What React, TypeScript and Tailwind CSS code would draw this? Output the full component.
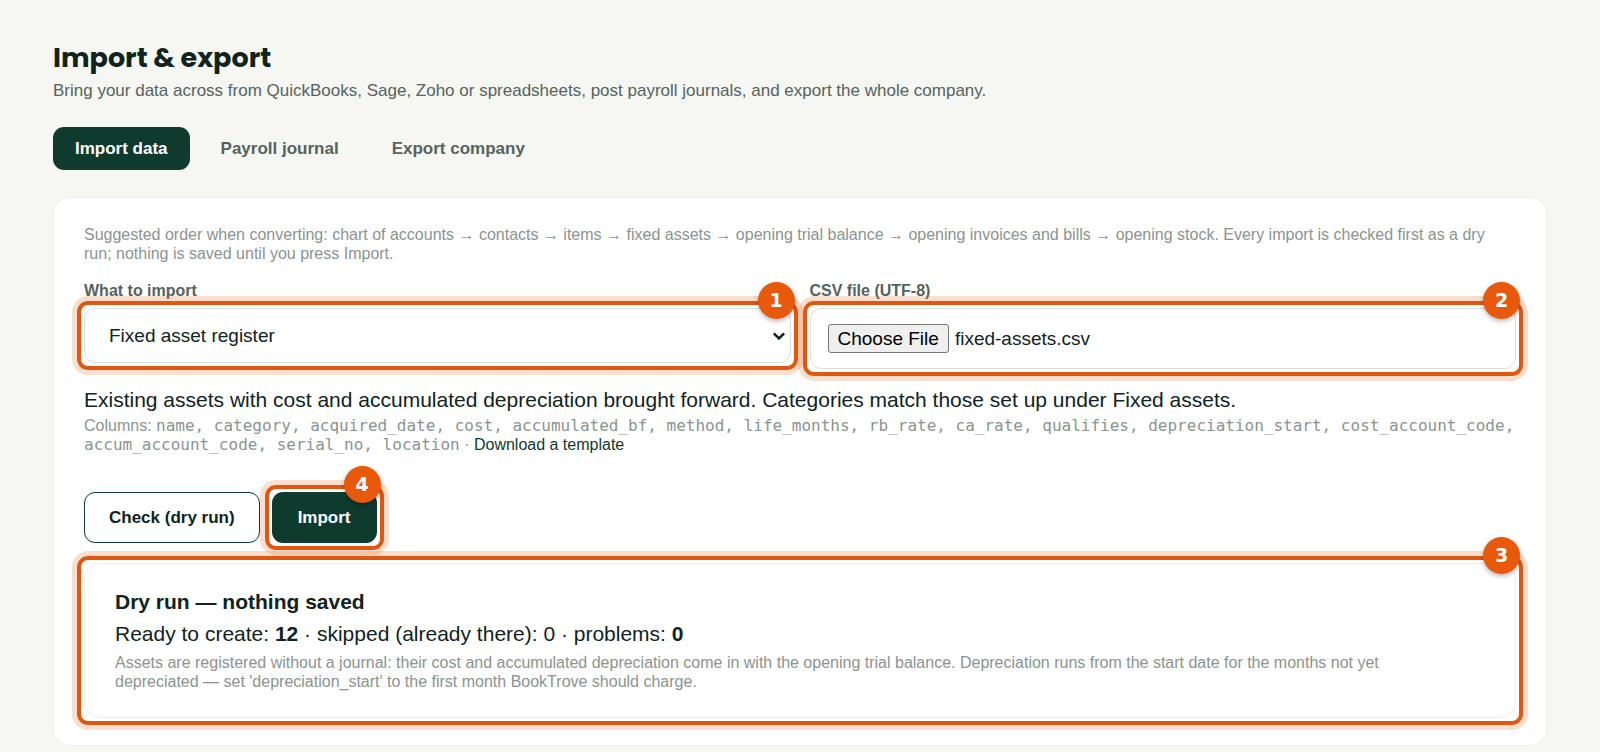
import { useEffect, useRef, useState } from 'react'

const tabs = ['Import data', 'Payroll journal', 'Export company']

const importTypes = [
  'Chart of accounts',
  'Contacts',
  'Items',
  'Fixed asset register',
  'Opening trial balance',
  'Opening invoices and bills',
  'Opening stock',
]

const columns = [
  'name',
  'category',
  'acquired_date',
  'cost',
  'accumulated_bf',
  'method',
  'life_months',
  'rb_rate',
  'ca_rate',
  'qualifies',
  'depreciation_start',
  'cost_account_code',
  'accum_account_code',
  'serial_no',
  'location',
]

// Orange ring with a numbered badge, drawn over the element it points at
function Callout({ step, children }: { step: number; children: React.ReactNode }) {
  return (
    <div className="relative">
      {children}
      <div className="pointer-events-none absolute -inset-[7px] z-10 rounded-[11px] border-4 border-[#e0580f] shadow-[0_0_0_5px_rgba(232,89,12,0.2)]">
        <span className="absolute -top-[23px] -right-px flex h-[37px] w-[37px] items-center justify-center rounded-full bg-[#e8590c] font-['DejaVu_Sans',sans-serif] text-[19px] font-bold text-white shadow-[0_2px_5px_rgba(0,0,0,0.3)]">
          {step}
        </span>
      </div>
    </div>
  )
}

export default function App() {
  const [tab, setTab] = useState('Import data')
  const [kind, setKind] = useState('Fixed asset register')
  const fileRef = useRef<HTMLInputElement>(null)

  useEffect(() => {
    if (!fileRef.current) return
    const transfer = new DataTransfer()
    transfer.items.add(new File([columns.join(',')], 'fixed-assets.csv', { type: 'text/csv' }))
    fileRef.current.files = transfer.files
  }, [])

  return (
    <div className="min-h-screen bg-[#f6f7f3] font-['Liberation_Sans',Arial,sans-serif] text-[21px] leading-[25px] text-[#10231d]">
      <main className="px-[53px] pt-[39px] pb-[5px]">
        <h1 className="font-['Poppins','Inter',sans-serif] text-[27px] leading-[38px] font-bold">
          Import &amp; export
        </h1>
        <p className="mt-[2px] text-[17px] leading-6 text-[#55635d]">
          Bring your data across from QuickBooks, Sage, Zoho or spreadsheets, post payroll journals, and export the
          whole company.
        </p>

        <nav className="mt-6 flex gap-[9px]">
          {tabs.map((label) => (
            <button
              key={label}
              type="button"
              onClick={() => setTab(label)}
              className={[
                'h-[43px] rounded-[11px] px-[22px] text-[17px] leading-5 font-bold',
                tab === label ? 'bg-[#0f3b2e] text-white' : 'text-[#55635d]',
              ].join(' ')}
            >
              {label}
            </button>
          ))}
        </nav>

        <section className="mt-[27px] rounded-2xl border border-[#eceeea] bg-white px-[30px] pt-[27px] pb-[27px]">
          <p className="text-base leading-[19px] text-[#8a948f]">
            Suggested order when converting: chart of accounts → contacts → items → fixed assets → opening trial
            balance → opening invoices and bills → opening stock. Every import is checked first as a dry run; nothing is
            saved until you press Import.
          </p>

          <div className="mt-[18px] grid grid-cols-2 items-start gap-[19px]">
            <div>
              <label htmlFor="kind" className="mb-[8px] block text-base leading-[19px] font-bold text-[#55635d]">
                What to import
              </label>
              <Callout step={1}>
                <select
                  id="kind"
                  value={kind}
                  onChange={(e) => setKind(e.target.value)}
                  className="block h-[55px] w-full appearance-none rounded-[11px] border border-[#dcdfe0] bg-white pl-6 text-[19px]"
                >
                  {importTypes.map((type) => (
                    <option key={type}>{type}</option>
                  ))}
                </select>
                <svg
                  className="pointer-events-none absolute inset-y-0 right-[5px] my-auto h-3 w-[14px]"
                  viewBox="0 0 14 12"
                  fill="none"
                  stroke="#10231d"
                  strokeWidth="2.6"
                >
                  <path d="M1.9 3.4 7 8.5l5.1-5.1" />
                </svg>
              </Callout>
            </div>
            <div>
              <label htmlFor="csv" className="mb-[8px] block text-base leading-[19px] font-bold text-[#55635d]">
                CSV file (UTF-8)
              </label>
              <Callout step={2}>
                <input
                  id="csv"
                  ref={fileRef}
                  type="file"
                  accept=".csv"
                  className="block w-full rounded-[11px] border border-[#dcdfe0] bg-white px-[17px] py-[15px] text-[19px] file:me-[6px] file:h-[29px] file:rounded-[3px] file:border file:border-solid file:border-[#767676] file:bg-[#efefef] file:px-[9px] file:text-[19px] file:text-black"
                />
              </Callout>
            </div>
          </div>

          <p className="mt-[18px]">
            Existing assets with cost and accumulated depreciation brought forward. Categories match those set up under
            Fixed assets.
          </p>
          <p className="mt-1 text-base leading-[19px] text-[#8a948f]">
            Columns: <code className="font-['DejaVu_Sans_Mono',monospace]">{columns.join(', ')}</code> ·{' '}
            <a href="#template" className="text-[#0f3b2e]">
              Download a template
            </a>
          </p>

          <div className="mt-[38px] flex gap-3">
            <button
              type="button"
              className="h-[51px] rounded-[11px] border border-[#0f3b2e] bg-white px-6 text-[17px] font-bold"
            >
              Check (dry run)
            </button>
            <Callout step={4}>
              <button
                type="button"
                className="block h-[51px] rounded-[11px] bg-[#0f3b2e] px-[26px] text-[17px] font-bold text-white"
              >
                Import
              </button>
            </Callout>
          </div>

          <div className="mt-[20px]">
            <Callout step={3}>
              <div className="rounded-2xl border border-[#eceeea] bg-white pt-[25px] pr-14 pb-[26px] pl-[30px]">
                <p className="font-bold">Dry run — nothing saved</p>
                <p className="mt-[7px]">
                  Ready to create: <strong>12</strong> · skipped (already there): 0 · problems: <strong>0</strong>
                </p>
                <p className="mt-[7px] text-base leading-[19px] text-[#8a948f]">
                  Assets are registered without a journal: their cost and accumulated depreciation come in with the
                  opening trial balance. Depreciation runs from the start date for the months not yet depreciated — set
                  'depreciation_start' to the first month BookTrove should charge.
                </p>
              </div>
            </Callout>
          </div>
        </section>
      </main>
    </div>
  )
}
